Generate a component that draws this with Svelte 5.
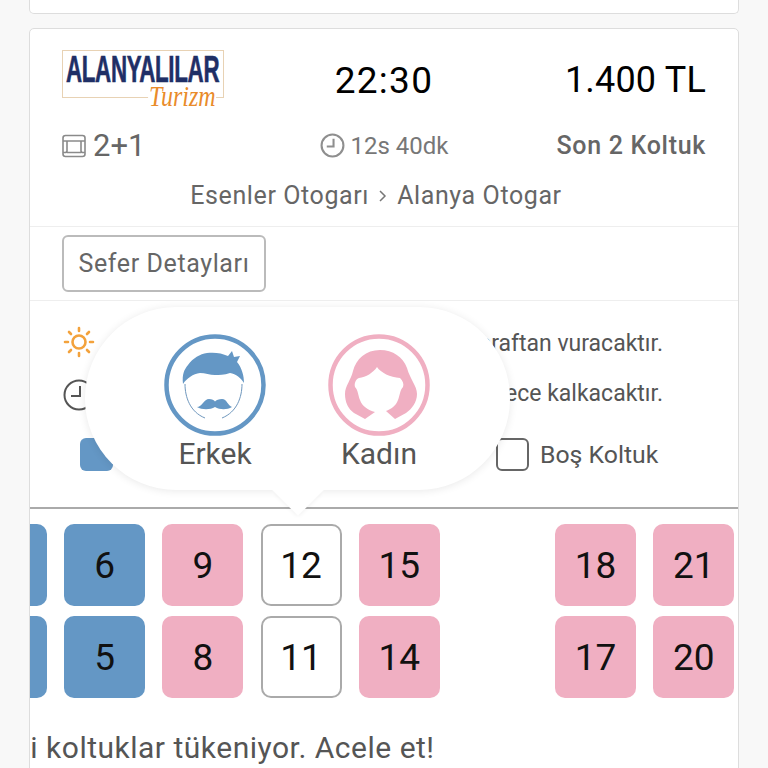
<script>
  const rows = [
    [3, 6, 9, 12, 15, null, 18, 21],
    [2, 5, 8, 11, 14, null, 17, 20]
  ];
  const kind = (n) => (n < 7 ? 'male' : n === 12 || n === 11 ? 'free' : 'female');
</script>

<div class="page">
  <div class="stub"></div>
  <main class="card">
    <section class="summary">
      <div class="row top">
        <div class="logo">
          <span class="brand">ALANYALILAR</span>
          <span class="sub">Turizm</span>
        </div>
        <div class="time">22:30</div>
        <div class="price">1.400 TL</div>
      </div>
      <div class="row meta">
        <div class="layout">
          <svg class="sofa" viewBox="0 0 24 24" fill="none" stroke="#8a8a8a" stroke-width="1.6">
            <rect x="1" y="1.5" width="22" height="21" rx="2.5" />
            <path d="M1 7H23M5 7V17Q5 18.5 3 18.5H1M19 7V17Q19 18.5 21 18.5H23M5 18.5H19" />
          </svg>
          <span>2+1</span>
        </div>
        <div class="duration">
          <svg viewBox="0 0 24 24" fill="none" stroke="#8f8f8f" stroke-width="2">
            <circle cx="12" cy="12" r="10.5" />
            <path d="M13 5.5V13H6.5" />
          </svg>
          <span>12s 40dk</span>
        </div>
        <div class="left">Son 2 Koltuk</div>
      </div>
      <div class="route">
        <span>Esenler Otogarı</span>
        <svg viewBox="0 0 10 14" fill="none" stroke="#777" stroke-width="1.5"><path d="M2 2l5 5-5 5" /></svg>
        <span>Alanya Otogar</span>
      </div>
    </section>

    <section class="actions">
      <button class="details">Sefer Detayları</button>
    </section>

    <section class="legend">
      <div class="note">
        <svg class="sun" viewBox="0 0 32 32" fill="none" stroke="#f3a23c" stroke-width="2.6" stroke-linecap="round">
          <circle cx="16" cy="16" r="6.5" />
          <path d="M16 2v3M16 27v3M2 16h3M27 16h3M6 6l2 2M24 24l2 2M6 26l2-2M24 8l2-2" />
        </svg>
        <span>Güneş bu yolculukta sol taraftan vuracaktır.</span>
      </div>
      <div class="note">
        <svg class="clock" viewBox="0 0 32 32" fill="none" stroke="#555" stroke-width="2">
          <circle cx="16" cy="16" r="14.5" />
          <path d="M17 7V17H8" />
        </svg>
        <span>Bu otobüs yolculuğu gece kalkacaktır.</span>
      </div>
      <div class="keys">
        <div class="key"><i class="box blue"></i><span>Erkek</span></div>
        <div class="key"><i class="box pink"></i><span>Kadın</span></div>
        <div class="key"><i class="box empty"></i><span>Boş Koltuk</span></div>
      </div>
    </section>

    <section class="seats">
      <div class="seat-grid">
        {#each rows as row}
          {#each row as n}
            {#if n === null}
              <div></div>
            {:else}
              <div class="seat {kind(n)}">{n}</div>
            {/if}
          {/each}
        {/each}
      </div>
    </section>

    <p class="hurry"><span>Bu fiyattaki koltuklar tükeniyor. Acele et!</span></p>

    <div class="popup">
      <div class="choice">
        <svg viewBox="0 0 102 102">
          <circle cx="51" cy="51" r="48.5" fill="none" stroke="#6497c5" stroke-width="4.5" />
          <path fill="#6497c5" d="M19 50C18 40 20 36 24 31C29 24 36 20 43 19C50 18 58 19 64 22L68 17L70 23L76 22L73 28C78 34 80 42 80 49C77 44 72 40 66 39C60 41 55 41 51 41C46 41 41 39 36 39C29 40 23 44 19 50Z" />
          <path fill="none" stroke="#6f97bd" stroke-width="1" d="M21 50C21 63 26 78 41 84M78 50C78 63 73 78 58 84" />
          <path fill="#6497c5" d="M33 73C38 73 40 65 45 65C48 65 50 66 51 67.5C52 66 55 65 58 65C63 65 64 72 68 73C63 76 56 76 51 73C46 76 38 76 33 73Z" />
        </svg>
        <span>Erkek</span>
      </div>
      <div class="choice">
        <svg viewBox="0 0 102 102">
          <circle cx="51" cy="51" r="48.5" fill="none" stroke="#f0afc2" stroke-width="4.5" />
          <path fill="#f0afc2" d="M52 16C38 16 28 25 25 37C23 46 17 52 17 60C17 68 20 75 26 79L37 85L47 78C40 76 34 72 32 66C30 61 30 56 27 53C26 49 28 45 31 44C38 43 45 39 49 33C53 39 62 43 72 44C75 47 76 50 75 53C72 56 72 61 70 66C68 72 63 75 58 77L67 85L78 79C84 75 89 68 89 60C89 52 82 45 79 34C75 23 65 16 52 16Z" />
        </svg>
        <span>Kadın</span>
      </div>
      <div class="tail"></div>
    </div>
  </main>
</div>

<style>
  :global(body) {
    margin: 0;
    background: #f8f8f8;
  }
  .page {
    height: 768px;
    overflow: hidden;
    padding: 0 29px;
    box-sizing: border-box;
    font-family: Roboto, "Liberation Sans", sans-serif;
    color: #666;
  }
  .stub {
    height: 14px;
    box-sizing: border-box;
    background: #fff;
    border: 1px solid #ddd;
    border-top: 0;
    border-radius: 0 0 5px 5px;
  }
  .card {
    position: relative;
    margin-top: 14px;
    height: 800px;
    background: #fff;
    border: 1px solid #ddd;
    border-radius: 5px;
    box-sizing: border-box;
    overflow: hidden;
  }
  .summary {
    height: 198px;
    padding: 21px 32px 0;
    box-sizing: border-box;
    border-bottom: 1px solid #eee;
  }
  .row {
    display: grid;
    grid-template-columns: 1fr auto 1fr;
    align-items: center;
  }
  .top {
    height: 60px;
    color: #000;
  }
  .logo {
    position: relative;
    width: 162px;
    height: 48px;
    box-sizing: border-box;
    border: 1px solid #e8d2b4;
    display: flex;
    justify-content: center;
    line-height: 37px;
    align-self: start;
  }
  .brand {
    font-family: "Liberation Sans", sans-serif;
    font-weight: 700;
    font-size: 36px;
    color: #1f2f66;
    transform: scaleX(0.62);
    -webkit-text-stroke: 0.6px #1f2f66;
    white-space: nowrap;
    letter-spacing: -0.5px;
  }
  .sub {
    position: absolute;
    right: 7px;
    top: 32px;
    padding: 0 1px;
    background: #fff;
    font-family: "Liberation Serif", serif;
    font-style: italic;
    font-size: 30px;
    line-height: 26px;
    color: #e98b2a;
    transform: scaleX(0.8);
    transform-origin: right center;
  }
  .time {
    font-size: 37px;
    letter-spacing: 1.3px;
  }
  .price {
    font-size: 36px;
    text-align: right;
    letter-spacing: 0.2px;
  }
  .meta {
    margin-top: 17px;
    height: 30px;
  }
  .layout {
    display: flex;
    align-items: center;
    gap: 7px;
    font-size: 31px;
    color: #666;
  }
  .sofa {
    width: 24px;
    height: 24px;
  }
  .duration {
    display: flex;
    align-items: center;
    gap: 6px;
    font-size: 24px;
    color: #777;
  }
  .duration svg {
    width: 25px;
    height: 25px;
  }
  .left {
    font-size: 25px;
    font-weight: 500;
    text-align: right;
    letter-spacing: 0.7px;
    color: #666;
  }
  .route {
    margin-top: 24px;
    padding-right: 16px;
    display: flex;
    justify-content: center;
    align-items: center;
    gap: 9px;
    font-size: 25px;
    color: #666;
    letter-spacing: 0.6px;
  }
  .route svg {
    width: 10px;
    height: 14px;
  }
  .actions {
    height: 74px;
    padding: 8px 32px 0;
    box-sizing: border-box;
    border-bottom: 1px solid #eee;
  }
  .details {
    display: block;
    width: 204px;
    height: 57px;
    padding: 0;
    background: #fff;
    border: 2px solid #bbb;
    border-radius: 6px;
    font: inherit;
    font-size: 25px;
    letter-spacing: 0.6px;
    color: #666;
  }
  .legend {
    height: 208px;
    padding: 25px 32px 0 32px;
    box-sizing: border-box;
    border-bottom: 2px solid #aaa;
    color: #555;
  }
  .note {
    display: flex;
    align-items: center;
    height: 34px;
    margin-bottom: 16px;
    gap: 10px;
    font-size: 23px;
    white-space: nowrap;
  }
  .note span {
    margin-left: auto;
    margin-right: 43px;
  }
  .sun {
    width: 32px;
    height: 32px;
    margin: -3px 0 0 1px;
  }
  .clock {
    width: 32px;
    height: 32px;
    margin: 4px 0 0 1px;
  }
  .keys {
    display: flex;
    margin-top: 28px;
    padding-left: 18px;
  }
  .key {
    display: flex;
    align-items: center;
    gap: 11px;
    font-size: 24.8px;
    width: 208px;
  }
  .box {
    display: block;
    width: 33px;
    height: 33px;
    box-sizing: border-box;
    border-radius: 6px;
  }
  .blue { background: #6497c5; }
  .pink { background: #f0afc2; }
  .empty { border: 2px solid #666; }
  .seats {
    overflow: hidden;
    padding-top: 15px;
  }
  .seat-grid {
    margin-left: -64px;
    display: grid;
    grid-template-columns: repeat(8, 81px);
    grid-auto-rows: 82px;
    gap: 10px 17.2px;
    width: max-content;
  }
  .seat {
    display: flex;
    align-items: center;
    justify-content: center;
    box-sizing: border-box;
    border-radius: 10px;
    font-size: 37px;
    color: #111;
  }
  .male { background: #6497c5; }
  .female { background: #f0afc2; }
  .free {
    background: #fff;
    border: 2px solid #aaa;
  }
  .hurry {
    margin: 32px 0 0;
    overflow: hidden;
    white-space: nowrap;
    font-size: 30px;
    letter-spacing: 0.5px;
    color: #555;
  }
  .hurry span {
    display: block;
    margin-left: -147px;
  }
  .popup {
    position: absolute;
    left: 55px;
    top: 278px;
    width: 425px;
    height: 183px;
    box-sizing: border-box;
    padding: 27px 0 0 79px;
    display: flex;
    gap: 62px;
    background: #fff;
    border-radius: 91px;
    box-shadow: 0 1px 8px rgba(0, 0, 0, 0.09);
  }
  .choice {
    width: 102px;
    display: flex;
    flex-direction: column;
    align-items: center;
    gap: 0;
    font-size: 30px;
    color: #555;
  }
  .choice svg {
    width: 102px;
    height: 102px;
    flex: none;
  }
  .tail {
    position: absolute;
    left: 194px;
    top: 163px;
    width: 38px;
    height: 38px;
    background: #fff;
    transform: rotate(45deg);
    box-shadow: 3px 3px 5px -3px rgba(0, 0, 0, 0.08);
  }
</style>
